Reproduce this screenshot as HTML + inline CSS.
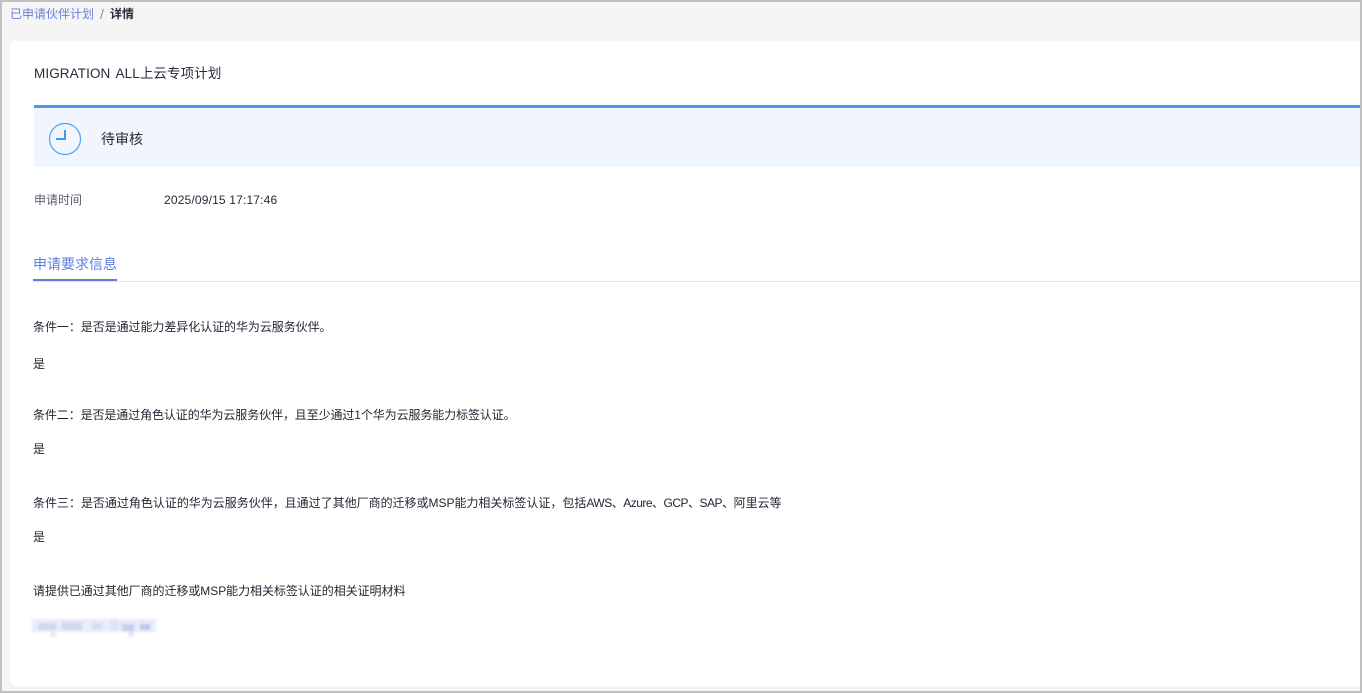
<!DOCTYPE html>
<html><head><meta charset="utf-8">
<style>
html,body{margin:0;padding:0;width:1362px;height:693px;overflow:hidden;background:#fff}
body{font-family:"Liberation Sans","Noto Sans CJK SC",sans-serif;font-size:12px;color:#1f2430;position:relative}
.a{position:absolute;white-space:nowrap;line-height:18px}
.b{position:absolute}
</style></head><body>
<div class="b" style="left:0;top:0;width:1362px;height:693px;background:#f5f5f5"></div>
<div class="b" style="left:10px;top:41px;width:1350px;height:645px;background:#fff;border-radius:6px 0 0 6px"></div>
<div class="a" style="left:10px;top:5px;color:#6a7fdc">已申请伙伴计划</div>
<div class="a" style="left:100px;top:5px;color:#8a8e99;font-size:14px">/</div>
<div class="a" style="left:110px;top:5px;font-weight:bold;color:#252b3a">详情</div>
<div class="a" style="left:34px;top:65px;font-size:13.5px;color:#252b3a;word-spacing:2px;letter-spacing:.1px">MIGRATION ALL<span style="letter-spacing:.1px">上云专项计划</span></div>
<div class="b" style="left:34px;top:105px;width:1326px;height:3px;background:#4b9ae8"></div>
<div class="b" style="left:34px;top:108px;width:1326px;height:59px;background:#f1f6fe"></div>
<svg class="b" style="left:48px;top:122px" width="34" height="34" viewBox="0 0 34 34"><circle cx="17" cy="17" r="15.5" fill="none" stroke="#4da3f5" stroke-width="1.2"/><path d="M8 17H17V8" fill="none" stroke="#3a97f2" stroke-width="2"/></svg>
<div class="a" style="left:101px;top:130px;font-size:14px;color:#252b3a">待审核</div>
<div class="a" style="left:34px;top:191px;color:#575d6c">申请时间</div>
<div class="a" style="left:164px;top:191px;color:#252b3a;letter-spacing:.17px">2025/09/15 17:17:46</div>
<div class="a" style="left:33px;top:255px;font-size:14px;color:#5e7ce0">申请要求信息</div>
<div class="b" style="left:33px;top:281px;width:1327px;height:1px;background:#e4e4e7"></div>
<div class="b" style="left:33px;top:279px;width:84px;height:2px;background:#5e7ce0"></div>
<div class="a" style="left:33px;top:318px;letter-spacing:-.06px">条件一：是否是通过能力差异化认证的华为云服务伙伴。</div>
<div class="a" style="left:33px;top:355px">是</div>
<div class="a" style="left:33px;top:406px;letter-spacing:-.1px">条件二：是否是通过角色认证的华为云服务伙伴，且至少通过1个华为云服务能力标签认证。</div>
<div class="a" style="left:33px;top:440px">是</div>
<div class="a" style="left:33px;top:494px;letter-spacing:-.015px">条件三：是否通过角色认证的华为云服务伙伴，且通过了其他厂商的迁移或MSP能力相关标签认证，包括<span style="letter-spacing:-.5px">AWS、Azure、GCP、SAP、</span>阿里云等</div>
<div class="a" style="left:33px;top:528px">是</div>
<div class="a" style="left:33px;top:582px;letter-spacing:-.05px">请提供已通过其他厂商的迁移或MSP能力相关标签认证的相关证明材料</div>
<div style="position:absolute;left:0;top:0;filter:blur(1px)">
<div class="b" style="left:32px;top:619px;width:124px;height:13px;background:#e9ecf9"></div>
<div class="b" style="left:38px;top:623px;width:18px;height:7px;background:#d2d8f0"></div>
<div class="b" style="left:62px;top:622px;width:20px;height:8px;background:#d2d8f0"></div>
<div class="b" style="left:92px;top:623px;width:10px;height:7px;background:#d8dcf2"></div>
<div class="b" style="left:110px;top:619px;width:8px;height:11px;background:#e0e4f6"></div>
<div class="b" style="left:122px;top:624px;width:12px;height:7px;background:#c8cfed"></div>
<div class="b" style="left:140px;top:624px;width:10px;height:6px;background:#bfc8eb"></div>
<div class="b" style="left:50px;top:631px;width:6px;height:6px;background:#e6e9f8"></div>
<div class="b" style="left:128px;top:631px;width:6px;height:6px;background:#e6e9f8"></div>
</div>
<div class="b" style="left:0;top:0;width:1362px;height:2px;background:#c0c0c0"></div>
<div class="b" style="left:0;top:691px;width:1362px;height:2px;background:#c0c0c0"></div>
<div class="b" style="left:0;top:0;width:2px;height:693px;background:#c0c0c0"></div>
<div class="b" style="left:1360px;top:0;width:2px;height:693px;background:#c0c0c0"></div>
</body></html>
